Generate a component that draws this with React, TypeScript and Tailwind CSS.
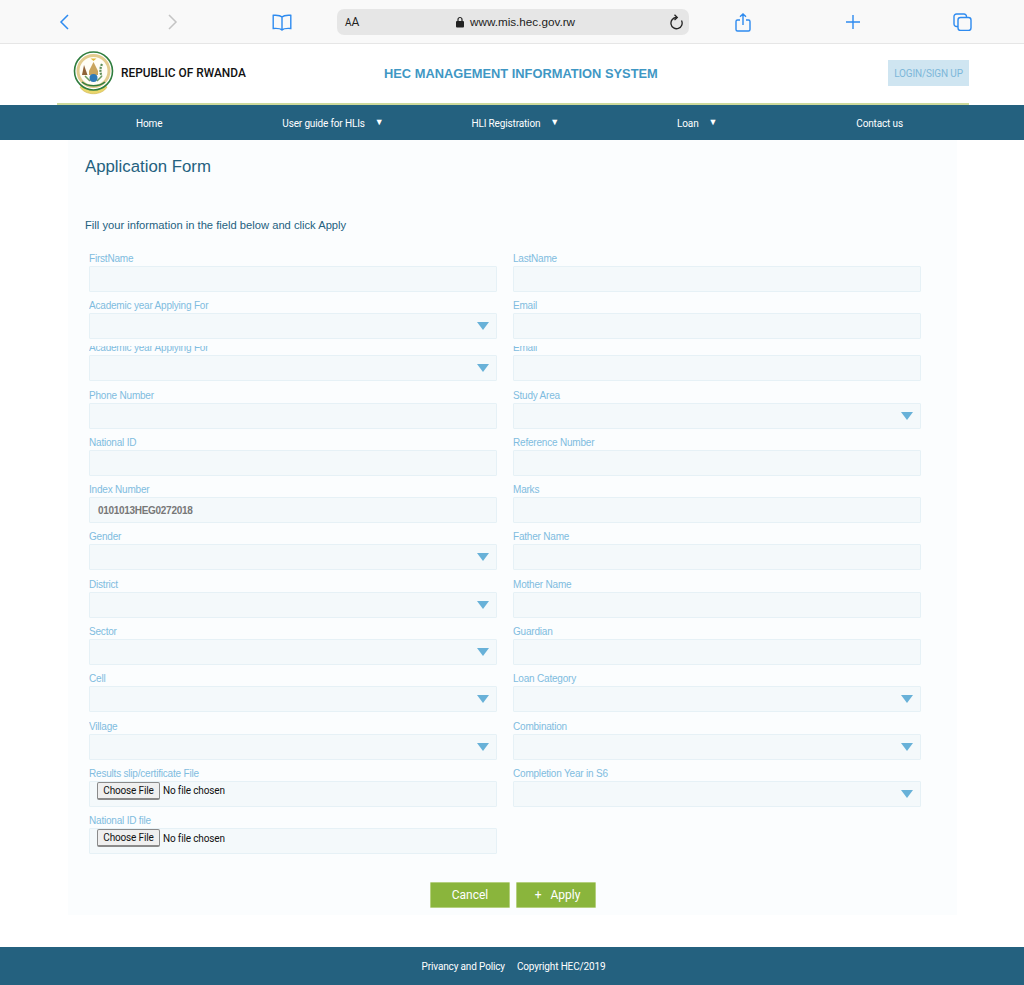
import type { ReactNode } from "react";

const arial = "font-['Liberation_Sans',Arial,sans-serif]";
const roboto = "font-['Roboto','Liberation_Sans',sans-serif]";

type FieldDef = { label: string; kind?: "text" | "select" | "file"; value?: string };

const rows: [FieldDef, FieldDef | null, boolean?][] = [
  [{ label: "FirstName" }, { label: "LastName" }],
  [{ label: "Academic year Applying For", kind: "select" }, { label: "Email" }],
  [{ label: "Academic year Applying For", kind: "select" }, { label: "Email" }, true],
  [{ label: "Phone Number" }, { label: "Study Area", kind: "select" }],
  [{ label: "National ID" }, { label: "Reference Number" }],
  [{ label: "Index Number", value: "0101013HEG0272018" }, { label: "Marks" }],
  [{ label: "Gender", kind: "select" }, { label: "Father Name" }],
  [{ label: "District", kind: "select" }, { label: "Mother Name" }],
  [{ label: "Sector", kind: "select" }, { label: "Guardian" }],
  [{ label: "Cell", kind: "select" }, { label: "Loan Category", kind: "select" }],
  [{ label: "Village", kind: "select" }, { label: "Combination", kind: "select" }],
  [{ label: "Results slip/certificate File", kind: "file" }, { label: "Completion Year in S6", kind: "select" }],
  [{ label: "National ID file", kind: "file" }, null],
];

function Seal() {
  return (
    <svg width="41" height="46" viewBox="0 0 41 46" className="shrink-0">
      <path d="M7 36c5 9 22 9 27 0l-3-2c-5 5-16 5-21 0z" fill="#e9d66b" stroke="#c9a93a" strokeWidth="0.5" />
      <circle cx="20.500" cy="20" r="19" fill="#fff" stroke="#2f7d3e" strokeWidth="1.600" />
      <circle cx="20.500" cy="20" r="15.500" fill="#fffdf6" stroke="#e3cc8e" strokeWidth="3" />
      <path d="M17.500 7.500h6l-3 2.500z" fill="#e0b93c" />
      <path d="M20.500 11l4.500 9v4h-9v-4z" fill="#c9a45e" />
      <path d="M11 14l3.500 10H9z" fill="#8f6238" />
      <path d="M29 13c-2 4-2 8-.5 12" stroke="#5f8f5a" strokeWidth="2.200" fill="none" strokeDasharray="2 1" />
      <circle cx="20.500" cy="27" r="4" fill="#2f79b8" />
      <path d="M12 25l5 5M29 25l-5 5" stroke="#6a9c62" strokeWidth="1.500" />
      <path d="M9 31c6 5 17 5 23 0" stroke="#2f7d3e" strokeWidth="1.500" fill="none" />
    </svg>
  );
}

function Toolbar() {
  const blue = "#2e8bf0";
  return (
    <div className="flex h-[44px] items-center border-b border-[#e6e6e6] bg-[#f9f9f9] pl-[59px] pt-[1px]">
      <svg width="10" height="16" viewBox="0 0 10 16" fill="none" stroke={blue} strokeWidth="1.500">
        <path d="M9 1 2 8l7 7" />
      </svg>
      <svg width="10" height="16" viewBox="0 0 10 16" fill="none" stroke="#c4c4c4" strokeWidth="1.500" className="ml-[99px]">
        <path d="m1 1 7 7-7 7" />
      </svg>
      <svg width="20" height="17" viewBox="0 0 20 17" fill="none" stroke={blue} strokeWidth="1.400" className="ml-[94px]">
        <path d="M10 3C8.500 1.500 5 1 1.200 1.300V14.500C5 14.200 8.500 14.500 10 16 11.500 14.500 15 14.200 18.800 14.500V1.300C15 1 11.500 1.500 10 3ZM10 3V16" />
      </svg>
      <div className={`ml-[45px] flex h-[26px] w-[352px] items-center rounded-[7px] bg-[#e6e6e6] pl-[8px] pr-[6px] text-[#222] ${roboto}`}>
        <span className="w-[110px] text-[12px]"><span className="text-[10px]">A</span>A</span>
        <svg width="10" height="12" viewBox="0 0 10 12" fill="#222">
          <rect x="1" y="5" width="8" height="6.500" rx="1" />
          <path d="M3 5.500V3.500a2 2 0 0 1 4 0v2" fill="none" stroke="#222" strokeWidth="1.200" />
        </svg>
        <span className={`ml-[5px] flex-1 text-[11.700px] ${arial}`}>www.mis.hec.gov.rw</span>
        <svg width="15" height="16" viewBox="0 0 15 16" fill="none" stroke="#222" strokeWidth="1.300">
          <path d="M8.500 3.500a5.600 5.600 0 1 0 5 3" />
          <path d="M6.500.8 9.300 3.500 6.500 6" />
        </svg>
      </div>
      <svg width="16" height="19" viewBox="0 0 16 19" fill="none" stroke={blue} strokeWidth="1.400" className="ml-[46px]">
        <path d="M5 7H2.500A1.500 1.500 0 0 0 1 8.500v8A1.500 1.500 0 0 0 2.500 18h11a1.500 1.500 0 0 0 1.500-1.500v-8A1.500 1.500 0 0 0 13.500 7H11M8 12V1M5 3.800 8 1l3 2.800" />
      </svg>
      <svg width="16" height="16" viewBox="0 0 16 16" fill="none" stroke={blue} strokeWidth="1.400" className="ml-[94px]">
        <path d="M8 1v14M1 8h14" />
      </svg>
      <svg width="19" height="18" viewBox="0 0 19 18" fill="none" stroke={blue} strokeWidth="1.400" className="ml-[92px]">
        <rect x="5" y="4.500" width="13" height="13" rx="2.500" />
        <path d="M5 13.500H3.500A2.500 2.500 0 0 1 1 11V3.500A2.500 2.500 0 0 1 3.500 1H11a2.500 2.500 0 0 1 2.500 2.500v1" />
      </svg>
    </div>
  );
}

function Header() {
  return (
    <div className="ml-[57px] mr-[55px] flex h-[61px] items-center border-b-2 border-[#cdd99b] bg-white pl-[16px]">
      <div className="flex w-[311px] items-center gap-[7px]">
        <Seal />
        <span className={`text-[11.900px] font-medium text-[#111] ${roboto}`}>REPUBLIC OF RWANDA</span>
      </div>
      <h1 className={`mt-[1px] w-[504px] text-[12.850px] font-bold text-[#3f97c4] ${arial}`}>HEC MANAGEMENT INFORMATION SYSTEM</h1>
      <div className={`-mt-[1px] flex h-[26px] w-[81px] items-center justify-center bg-[#cfe5f1] text-[10px] tracking-[-0.15px] text-[#7db7d9] ${roboto}`}>
        LOGIN/SIGN UP
      </div>
    </div>
  );
}

function NavItem({ left, children, caret }: { left: string; children: ReactNode; caret?: boolean }) {
  return (
    <div className={`flex items-center ${left}`}>
      <span>{children}</span>
      {caret && <span className="ml-[10px] text-[9px]">▼</span>}
    </div>
  );
}

function Nav() {
  return (
    <nav className={`flex h-[35px] items-center bg-[#24617f] pt-[1px] text-[10px] tracking-[-0.15px] text-white ${roboto}`}>
      <NavItem left="ml-[136px]">Home</NavItem>
      <NavItem left="ml-[120px]" caret>User guide for HLIs</NavItem>
      <NavItem left="ml-[88px]" caret>HLI Registration</NavItem>
      <NavItem left="ml-[118px]" caret>Loan</NavItem>
      <NavItem left="ml-[139px]">Contact us</NavItem>
    </nav>
  );
}

function Field({ def, clipped }: { def: FieldDef; clipped?: boolean }) {
  const kind = def.kind ?? "text";
  return (
    <div className={`flex flex-col justify-end overflow-hidden ${clipped ? "mt-[7px] h-[35px]" : "h-[47.300px]"}`}>
      <label className={`block h-[21px] shrink-0 pt-[6px] text-[10px] leading-[15px] tracking-[-0.2px] text-[#7fbcdf] ${arial}`}>{def.label}</label>
      <div className="relative h-[26px] shrink-0 rounded-[1px] border border-[#e6f1f6] bg-[#f4f9fb]">
        {kind === "select" && (
          <span className="absolute right-[7px] top-[8px] h-0 w-0 border-x-[6px] border-t-[8px] border-x-transparent border-t-[#68b1d8]" />
        )}
        {def.value && (
          <span className={`absolute left-[8px] top-[5px] text-[10px] font-bold tracking-[-0.3px] text-[#777] ${arial}`}>{def.value}</span>
        )}
        {kind === "file" && (
          <div className={`flex items-center pl-[7px] text-[10px] tracking-[-0.15px] text-[#111] ${roboto}`}>
            <span className="flex h-[18px] w-[63px] items-center justify-center rounded-[2px] border border-b-2 border-[#8a8a8a] bg-[#efefef]">Choose File</span>
            <span className="ml-[3px]">No file chosen</span>
          </div>
        )}
      </div>
    </div>
  );
}

export default function App() {
  return (
    <div className={`flex h-[985px] flex-col overflow-hidden bg-white ${arial}`}>
      <Toolbar />
      <Header />
      <Nav />
      <main className="ml-[68px] h-[775px] w-[889px] bg-[#fbfdfe] pl-[17px]">
        <h2 className="pt-[16px] text-[16.800px] leading-[22px] text-[#24617f]">Application Form</h2>
        <p className="mt-[40px] text-[11.200px] leading-[15px] text-[#24617f]">Fill your information in the field below and click Apply</p>
        <div className="ml-[4px] mt-[11.700px] flex flex-col">
          {rows.map(([a, b, clipped], i) => (
            <div key={i} className="grid grid-cols-[408px_408px] gap-x-[16px]">
              <Field def={a} clipped={clipped} />
              {b ? <Field def={b} clipped={clipped} /> : <div />}
            </div>
          ))}
        </div>
        <div className={`ml-[345px] mt-[28px] flex gap-[6px] ${roboto}`}>
          <button className="flex h-[26px] w-[80px] items-center justify-center rounded-[1px] border border-[#b5d07f] bg-[#8ab53c] text-[12px] text-white">Cancel</button>
          <button className="flex h-[26px] w-[80px] items-center justify-center rounded-[1px] border border-[#b5d07f] bg-[#8ab53c] pl-[3px] text-[12px] text-white">
            <span className="mr-[9px]">+</span>Apply
          </button>
        </div>
      </main>
      <footer className={`mt-[32px] flex h-[38px] items-center justify-center gap-[12px] bg-[#24617f] pl-[3px] text-[10px] tracking-[-0.15px] text-white ${roboto}`}>
        <span>Privancy and Policy</span>
        <span>Copyright HEC/2019</span>
      </footer>
    </div>
  );
}
